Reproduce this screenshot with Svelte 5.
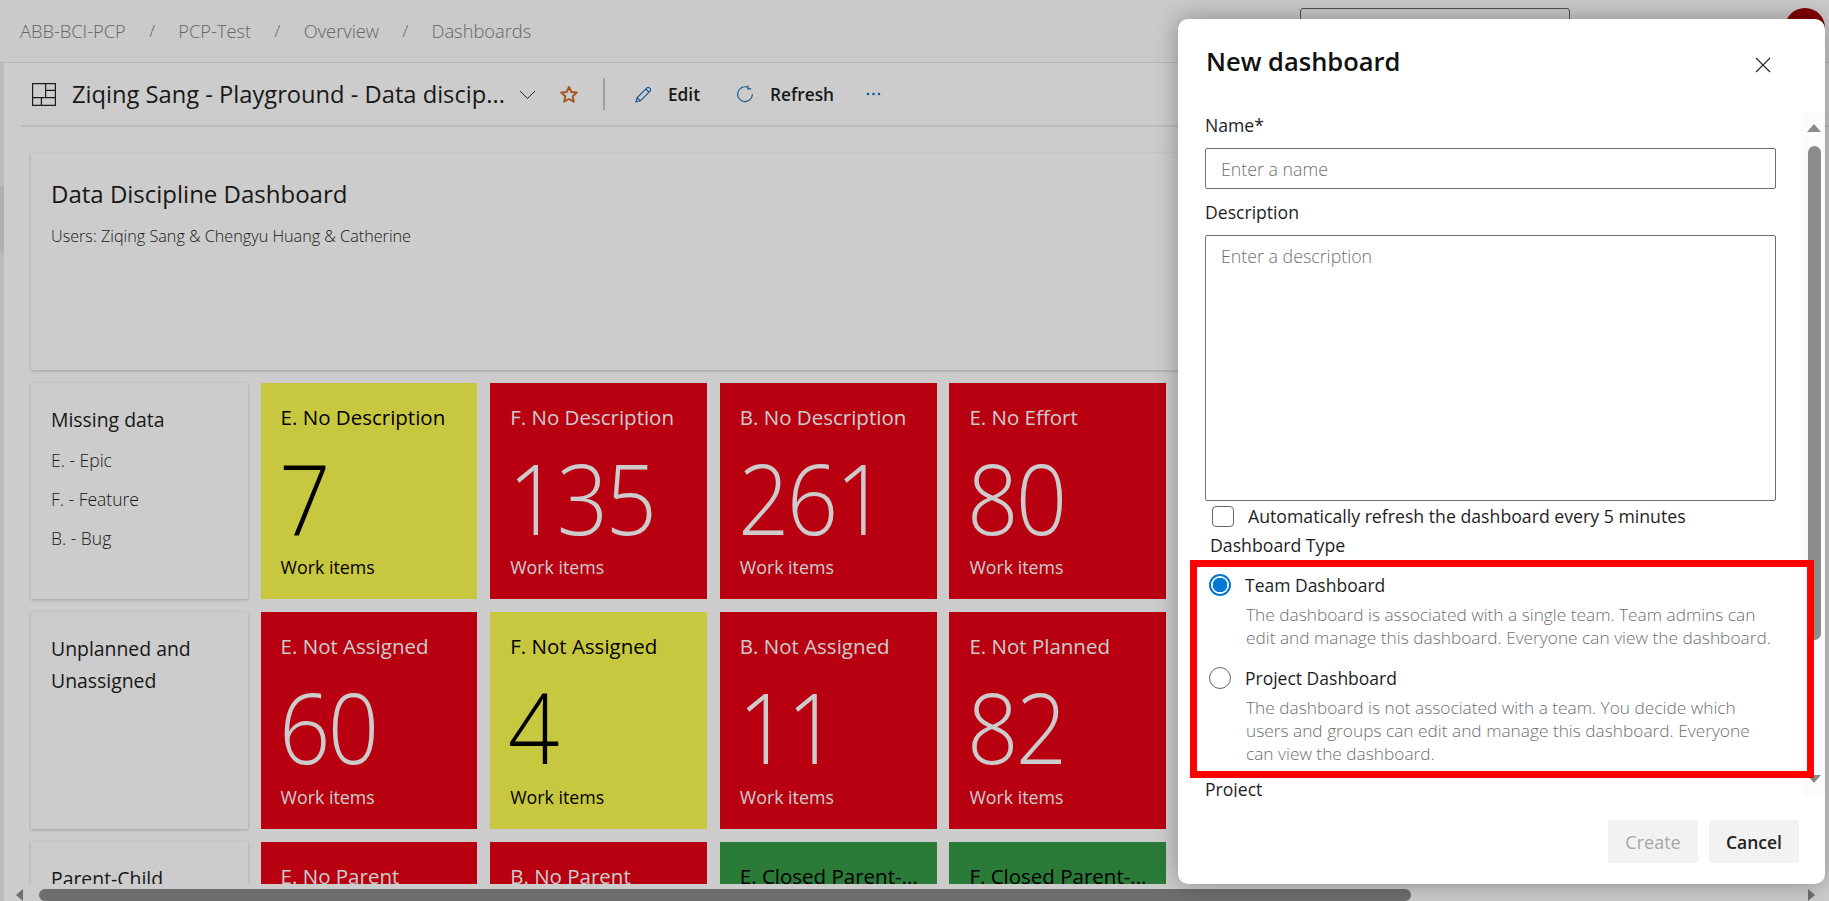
<script lang="ts">
	type Tile = { title: string; value?: string; tone: 'red' | 'yellow' | 'green' };
	type Row = { heading: string[]; notes?: string[]; tiles: Tile[] };

	const crumbs = ['ABB-BCI-PCP', 'PCP-Test', 'Overview', 'Dashboards'];

	const rows: Row[] = [
		{
			heading: ['Missing data'],
			notes: ['E. - Epic', 'F. - Feature', 'B. - Bug'],
			tiles: [
				{ title: 'E. No Description', value: '7', tone: 'yellow' },
				{ title: 'F. No Description', value: '135', tone: 'red' },
				{ title: 'B. No Description', value: '261', tone: 'red' },
				{ title: 'E. No Effort', value: '80', tone: 'red' }
			]
		},
		{
			heading: ['Unplanned and', 'Unassigned'],
			tiles: [
				{ title: 'E. Not Assigned', value: '60', tone: 'red' },
				{ title: 'F. Not Assigned', value: '4', tone: 'yellow' },
				{ title: 'B. Not Assigned', value: '11', tone: 'red' },
				{ title: 'E. Not Planned', value: '82', tone: 'red' }
			]
		},
		{
			heading: ['Parent-Child'],
			tiles: [
				{ title: 'E. No Parent', tone: 'red' },
				{ title: 'B. No Parent', tone: 'red' },
				{ title: 'E. Closed Parent-...', tone: 'green' },
				{ title: 'F. Closed Parent-...', tone: 'green' }
			]
		}
	];
</script>

<div class="page">
	<header class="topbar">
		<nav class="crumbs">
			{#each crumbs as crumb, i}
				{#if i > 0}<span class="slash">/</span>{/if}
				<span>{crumb}</span>
			{/each}
		</nav>
		<div class="search"></div>
		<div class="avatar"></div>
	</header>

	<div class="body">
		<div class="rail"><div class="rail-thumb"></div></div>
		<main>
			<div class="toolbar">
				<svg class="board-icon" width="24" height="23" viewBox="0 0 24 23" fill="none" stroke="#222" stroke-width="1.2">
					<path d="M.6.6h22.8v21.8H.6zM13.6.6v14M.6 14.6h22.8M13.6 7.4h9.8M9.4 14.6v7.8" />
				</svg>
				<span class="board-name">Ziqing Sang - Playground - Data discip...</span>
				<svg class="chevron" width="17" height="10" viewBox="0 0 17 10" fill="none" stroke="#333" stroke-width="1">
					<path d="M1 1l7.5 7.5L16 1" />
				</svg>
				<svg class="star" width="20" height="19" viewBox="0 0 20 19" fill="none" stroke="#c96f30" stroke-width="2" stroke-linejoin="round">
					<path d="M10 2l2.3 5 5.5.6-4.1 3.7 1.1 5.4L10 14l-4.8 2.7 1.1-5.4-4.1-3.7 5.5-.6z" />
				</svg>
				<span class="divider"></span>
				<button class="tool">
					<svg width="17" height="17" viewBox="0 0 17 17" fill="none" stroke="#1f6fb5" stroke-width="1.2">
						<path d="M1 16l1.2-4.4L12 1.8a1.6 1.6 0 0 1 2.3 0l.9.9a1.6 1.6 0 0 1 0 2.3L5.400 14.800zM2.200 11.600l3.200 3.200M10.800 3l3.200 3.200" />
					</svg>
					Edit
				</button>
				<button class="tool refresh">
					<svg width="18" height="18" viewBox="0 0 18 18" fill="none" stroke="#1f6fb5" stroke-width="1.2">
						<path d="M11.500 2.200A7.400 7.400 0 1 0 16.400 9M11.800.4v3.400H15.200" />
					</svg>
					Refresh
				</button>
				<svg class="dots" width="15" height="4" viewBox="0 0 15 4" fill="#1f6fb5">
					<circle cx="2" cy="2" r="1.300" /><circle cx="7.500" cy="2" r="1.300" /><circle cx="13" cy="2" r="1.300" />
				</svg>
			</div>

			<div class="dash">
				<section class="panel banner">
					<h1>Data Discipline Dashboard</h1>
					<p>Users: Ziqing Sang &amp; Chengyu Huang &amp; Catherine</p>
				</section>
				{#each rows as row}
					<section class="panel side">
						<h2>
							{#each row.heading as line}<span>{line}</span>{/each}
						</h2>
						{#each row.notes ?? [] as note}
							<p>{note}</p>
						{/each}
					</section>
					{#each row.tiles as tile}
						<article class="tile {tile.tone}">
							<h3>{tile.title}</h3>
							{#if tile.value}
								<div class="count">{tile.value}</div>
								<div class="unit">Work items</div>
							{/if}
						</article>
					{/each}
				{/each}
			</div>

			<div class="hscroll">
				<span class="arrow-left"></span>
				<span class="hthumb"></span>
				<span class="arrow-right"></span>
			</div>
		</main>
	</div>

	<div class="scrim"></div>

	<div class="modal" role="dialog" aria-label="New dashboard">
		<div class="modal-head">
			<h2>New dashboard</h2>
			<svg width="16" height="16" viewBox="0 0 16 16" fill="none" stroke="#222" stroke-width="1.1">
				<path d="M1 1l14 14M15 1L1 15" />
			</svg>
		</div>

		<div class="modal-body">
			<form>
				<label class="field-label" for="dash-name">Name*</label>
				<input id="dash-name" class="text" type="text" placeholder="Enter a name" />
				<label class="field-label second" for="dash-desc">Description</label>
				<textarea id="dash-desc" class="text" placeholder="Enter a description"></textarea>
				<label class="check">
					<input type="checkbox" />
					<span>Automatically refresh the dashboard every 5 minutes</span>
				</label>
				<div class="type-label">Dashboard Type</div>
				<div class="radios">
					<label class="radio first">
						<input type="radio" name="kind" checked />
						<span>Team Dashboard</span>
					</label>
					<p>The dashboard is associated with a single team. Team admins can edit and manage this dashboard. Everyone can view the dashboard.</p>
					<label class="radio">
						<input type="radio" name="kind" />
						<span>Project Dashboard</span>
					</label>
					<p>The dashboard is not associated with a team. You decide which users and groups can edit and manage this dashboard. Everyone can view the dashboard.</p>
				</div>
				<div class="field-label project">Project</div>
			</form>
			<div class="vscroll">
				<span class="arrow-up"></span>
				<span class="vthumb"></span>
				<span class="arrow-down"></span>
			</div>
		</div>

		<div class="modal-foot">
			<button class="btn" disabled>Create</button>
			<button class="btn">Cancel</button>
		</div>

		<div class="highlight"></div>
	</div>
</div>

<style>
	:global(body) {
		margin: 0;
		font-family: 'Open Sans', 'Noto Sans', sans-serif;
		color: #1e1e1e;
	}

	.page {
		position: relative;
		display: flex;
		flex-direction: column;
		width: 1829px;
		height: 901px;
		overflow: hidden;
		background: #fff;
	}

	.topbar {
		position: relative;
		display: flex;
		align-items: center;
		flex: none;
		height: 62px;
		border-bottom: 1px solid #e4e4e4;
		background: #fdfdfd;
	}

	.crumbs {
		display: flex;
		align-items: center;
		padding: 0 0 2px 20px;
		font-size: 18.300px;
		font-weight: 300;
		color: #808080;
	}

	.slash {
		width: 52.500px;
		text-align: center;
		font-size: 17px;
	}

	.search {
		position: absolute;
		left: 1300px;
		top: 8px;
		width: 270px;
		height: 38px;
		box-sizing: border-box;
		border: 1px solid #666;
		border-radius: 3px;
	}

	.avatar {
		position: absolute;
		left: 1785px;
		top: 8px;
		width: 40px;
		height: 40px;
		border-radius: 50%;
		background: #a00000;
	}

	.body {
		display: flex;
		flex: 1;
		min-height: 0;
	}

	.rail {
		flex: none;
		width: 4px;
		background: #ececec;
	}

	.rail-thumb {
		height: 65px;
		margin-top: 124px;
		background: #dcdcdc;
	}

	main {
		display: flex;
		flex: 1;
		flex-direction: column;
		min-width: 0;
	}

	.toolbar {
		display: flex;
		align-items: center;
		flex: none;
		height: 62px;
		margin-left: 17px;
		padding-left: 11px;
		border-bottom: 2px solid #ebebeb;
	}

	.board-name {
		margin-left: 16px;
		font-size: 23.700px;
		white-space: nowrap;
	}

	.chevron {
		margin-left: 14px;
		margin-top: 2px;
	}

	.star {
		margin-left: 23px;
	}

	.divider {
		width: 2px;
		height: 32px;
		margin-left: 24px;
		background: #c9c9c9;
	}

	.tool {
		display: flex;
		align-items: center;
		gap: 16px;
		margin-left: 30px;
		padding: 0;
		border: 0;
		background: none;
		font: 600 17.300px 'Open Sans', sans-serif;
		color: #1e1e1e;
	}

	.tool.refresh {
		margin-left: 36px;
		gap: 16px;
	}

	.dots {
		margin-left: 32px;
	}

	.dash {
		display: grid;
		flex: 1;
		grid-template-columns: repeat(6, 216.800px);
		grid-auto-rows: 216.800px;
		gap: 12.800px;
		min-height: 0;
		padding: 26px 0 0 27px;
		overflow: hidden;
	}

	.panel {
		box-sizing: border-box;
		padding: 20px;
		background: #fff;
		box-shadow: 0 1px 3px rgba(0, 0, 0, 0.22);
	}

	.banner {
		grid-column: 1 / -1;
	}

	.banner h1 {
		margin: 5px 0 0;
		font-size: 24px;
		font-weight: 400;
		line-height: 32px;
	}

	.banner p {
		margin: 16px 0 0;
		font-size: 16.200px;
		font-weight: 300;
		line-height: 20px;
	}

	.side {
		grid-column: 1;
	}

	.side h2 {
		margin: 1px 0 5px;
		font-size: 19.400px;
		font-weight: 400;
		line-height: 32px;
	}

	.side h2 span {
		display: block;
	}

	.side p {
		margin: 0;
		font-size: 17.500px;
		font-weight: 300;
		line-height: 39px;
	}

	.tile {
		display: flex;
		flex-direction: column;
		box-sizing: border-box;
		padding: 20px 20px 20px;
		color: #fff;
	}

	.tile.red {
		background: #e60016;
	}

	.tile.yellow {
		background: #fbfb50;
		color: #000;
	}

	.tile.green {
		background: #359a47;
		color: #000;
	}

	.tile h3 {
		margin: 0;
		font-size: 20.500px;
		font-weight: 400;
		line-height: 28px;
		white-space: nowrap;
	}

	.count {
		margin: 16px 0 0 -2px;
		font-size: 97px;
		font-weight: 300;
		line-height: 100px;
		letter-spacing: -3px;
		transform: scaleX(0.93);
		transform-origin: left;
	}

	.unit {
		margin-top: auto;
		font-size: 17.800px;
		line-height: 24px;
	}

	.hscroll {
		position: relative;
		display: flex;
		align-items: flex-end;
		flex: none;
		height: 17px;
		background: #fff;
	}

	.arrow-left {
		width: 0;
		height: 0;
		margin: 0 0 0 12px;
		border: 6px solid transparent;
		border-left: 0;
		border-right: 7px solid #8a8a8a;
	}

	.hthumb {
		width: 1372px;
		height: 12px;
		margin-left: 16px;
		border-radius: 6px;
		background: #8a8a8a;
	}

	.arrow-right {
		width: 0;
		height: 0;
		margin-left: auto;
		margin-right: 14px;
		border: 6px solid transparent;
		border-right: 0;
		border-left: 7px solid #8a8a8a;
	}

	.scrim {
		position: absolute;
		inset: 0;
		background: rgba(0, 0, 0, 0.2);
	}

	.modal {
		position: absolute;
		left: 1178px;
		top: 19px;
		display: flex;
		flex-direction: column;
		width: 647px;
		height: 865px;
		border-radius: 10px;
		background: #fff;
		box-shadow: 0 0 24px rgba(0, 0, 0, 0.32);
	}

	.modal-head {
		display: flex;
		align-items: center;
		justify-content: space-between;
		flex: none;
		height: 93px;
		padding: 0 54px 0 28px;
		box-sizing: border-box;
	}

	.modal-head h2 {
		margin: -9px 0 0;
		font-size: 25.500px;
		font-weight: 600;
		color: #111;
	}

	.modal-head svg {
		margin-top: -2px;
	}

	.modal-body {
		display: flex;
		flex: none;
		height: 685px;
		overflow: hidden;
	}

	form {
		flex: 1;
		min-width: 0;
		padding: 1px 26px 0 27px;
	}

	.field-label {
		display: block;
		font-size: 17.600px;
		line-height: 24px;
	}

	.second {
		margin-top: 11px;
	}

	.text {
		display: block;
		box-sizing: border-box;
		width: 571px;
		margin: 11px 0 0;
		padding: 0 15px;
		border: 1px solid #6f6f6f;
		border-radius: 2px;
		background: #fff;
		font: 300 17.800px 'Open Sans', sans-serif;
		color: #1e1e1e;
		outline: none;
	}

	input.text {
		height: 41px;
	}

	textarea.text {
		height: 266px;
		padding-top: 8px;
		resize: none;
	}

	.text::placeholder {
		color: #6f6f6f;
		opacity: 1;
	}

	.check {
		display: flex;
		align-items: center;
		gap: 14px;
		height: 22px;
		margin: 4px 0 0 7px;
		font-size: 17.700px;
	}

	.check input {
		appearance: none;
		flex: none;
		width: 22px;
		height: 21px;
		margin: 0;
		border: 1px solid #666;
		border-radius: 4px;
	}

	.type-label {
		margin: 6px 0 0 5px;
		font-size: 17.700px;
		line-height: 24px;
	}

	.radios {
		margin-top: 16px;
		margin-left: 4px;
	}

	.radio {
		display: flex;
		align-items: center;
		gap: 14px;
		height: 24px;
		font-size: 17.500px;
	}

	.radio input {
		appearance: none;
		flex: none;
		box-sizing: border-box;
		width: 22px;
		height: 22px;
		margin: 0;
		border: 1px solid #666;
		border-radius: 50%;
		background: #fff;
	}

	.radio input:checked {
		border: 2px solid #0078d4;
		background: radial-gradient(circle, #0078d4 0 7px, #fff 7.500px);
	}

	.radios p {
		margin: 6px 0 16px 37px;
		width: 530px;
		font-size: 17.300px;
		font-weight: 300;
		line-height: 23.300px;
		color: #6f6f6f;
	}

	.project {
		margin-top: -4px;
	}

	.vscroll {
		position: relative;
		display: flex;
		flex-direction: column;
		align-items: center;
		flex: none;
		box-sizing: border-box;
		width: 22px;
		background: #fbfbfb;
	}

	.arrow-up {
		width: 0;
		height: 0;
		margin-top: 12px;
		border: 7px solid transparent;
		border-top: 0;
		border-bottom: 8px solid #8a8a8a;
	}

	.vthumb {
		width: 13px;
		height: 494px;
		margin-top: 14px;
		border-radius: 7px;
		background: #8c8c8c;
	}

	.arrow-down {
		width: 0;
		height: 0;
		margin-top: auto;
		margin-bottom: 14px;
		border: 7px solid transparent;
		border-bottom: 0;
		border-top: 8px solid #8a8a8a;
	}

	.modal-foot {
		display: flex;
		justify-content: flex-end;
		gap: 11px;
		flex: none;
		padding: 23px 26px 0 0;
	}

	.btn {
		width: 90px;
		height: 43px;
		padding: 0;
		border: 0;
		border-radius: 3px;
		background: #f2f2f2;
		font: 600 17.500px 'Open Sans', sans-serif;
		color: #222;
	}

	.btn:disabled {
		color: #a6a6a6;
		font-size: 18px;
		font-weight: 400;
	}

	.highlight {
		position: absolute;
		left: 12px;
		top: 541px;
		box-sizing: border-box;
		width: 624px;
		height: 218px;
		border: 7px solid #f00;
		pointer-events: none;
	}
</style>
